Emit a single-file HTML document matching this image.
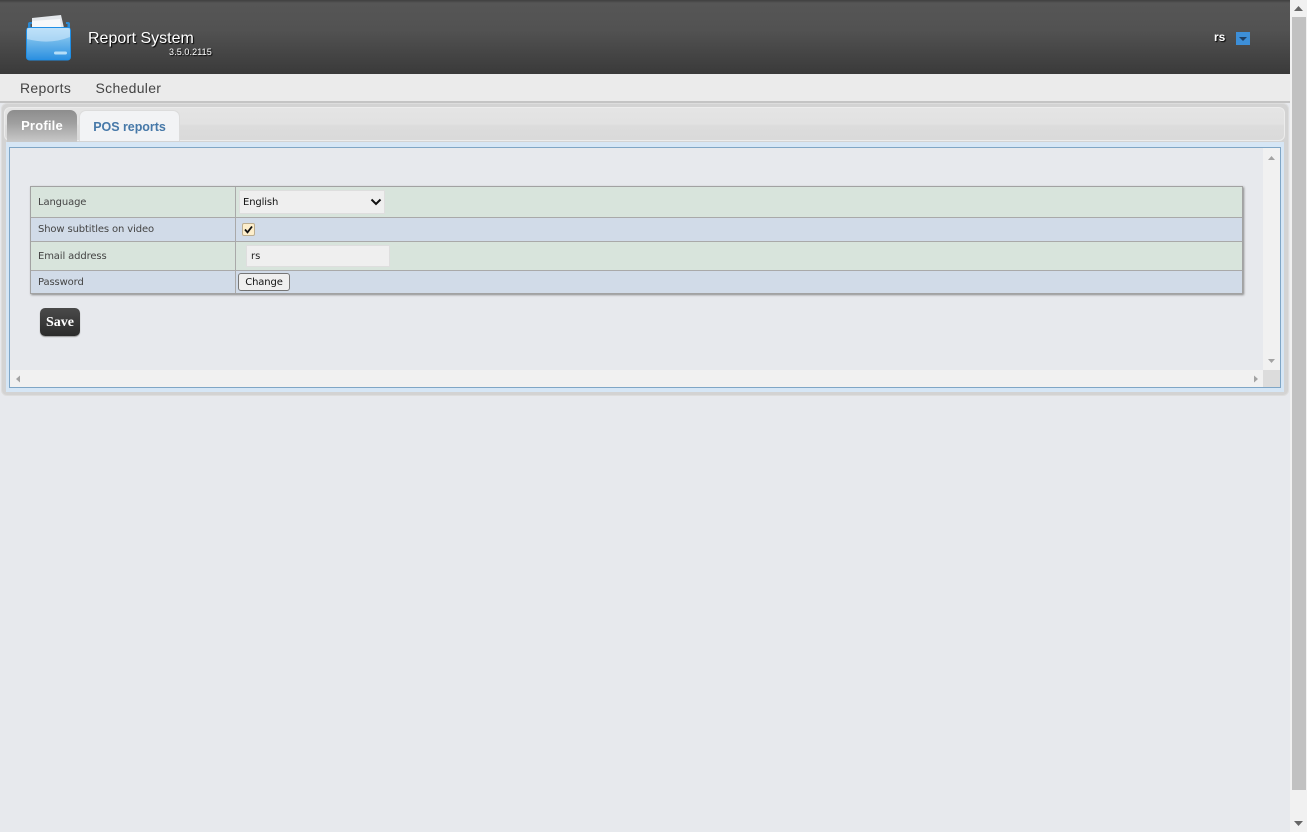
<!DOCTYPE html>
<html><head><meta charset="utf-8"><title>Report System</title>
<style>
html,body{margin:0;padding:0;width:1307px;height:832px;overflow:hidden;background:#e7e9ed;font-family:"DejaVu Sans","Liberation Sans",sans-serif;color:#333}
.a{position:absolute}
#hdr{left:0;top:0;width:1290px;height:74px;background:linear-gradient(#3f3f3f 0,#565656 3px,#525252 30px,#3a3a3a 74px)}
#nav{left:0;top:74px;width:1290px;height:27px;background:#ebebeb;border-bottom:2px solid #c4c4c4}
.nv{font-size:14px;top:80px;color:#444;line-height:16px;font-family:"Liberation Sans",sans-serif;letter-spacing:.3px}
#sb{left:1290px;top:0;width:17px;height:832px;background:#f1f1f1}
#th{left:1292px;top:17px;width:14px;height:773px;background:#c1c1c1}
#wrap{left:1px;top:103px;width:1288px;height:293px;background:#d3d3d3;border-radius:6px;box-sizing:border-box;border:1px solid #ddd}
#tabbar{left:4px;top:107px;width:1281px;height:34px;border-radius:6px;background:linear-gradient(#e4e4e4 0,#e2e2e2 50%,#dcdcdc 55%,#dadada 100%);border:1px solid #ececec;box-sizing:border-box}
.tab{box-sizing:border-box;border-radius:7px 7px 0 0;text-align:center;font-weight:bold;font-size:13px;line-height:31px;font-family:"Liberation Sans",sans-serif}
#bluebg{left:6px;top:142px;width:1278px;height:250px;background:#d6e6f5}
#pane{left:9px;top:147px;width:1272px;height:241px;box-sizing:border-box;border:1px solid #7fa6c6;background:#e7e9ed}
#vs{left:1263px;top:148px;width:17px;height:222px;background:#f1f1f1}
#hs{left:10px;top:370px;width:1253px;height:17px;background:#f1f1f1}
#cn{left:1263px;top:370px;width:17px;height:17px;background:#dcdcdc}
#tbl{left:30px;top:186px;width:1213px;height:108px;box-sizing:border-box;border:1px solid #a2a2a2;box-shadow:1px 1px 2px #888}
.r{position:absolute;left:0;width:1211px;box-sizing:border-box;border-bottom:1px solid #a9a9a9}
.l{position:absolute;left:7px;font-size:10px;color:#444;line-height:12px;white-space:nowrap;letter-spacing:-.13px}
#vl{left:235px;top:187px;width:1px;height:106px;background:#a9a9a9}
.sel{box-sizing:border-box;left:239px;top:190px;width:146px;height:24px;background:#efefef;border:1px solid #dedede;font-size:10px;line-height:24px;padding-left:3px;color:#111;letter-spacing:-.13px}
.inp{box-sizing:border-box;left:246px;top:245px;width:144px;height:22px;background:#efefef;border:1px solid #dedede;font-size:10px;line-height:22px;padding-left:4px;color:#222}
.chk{box-sizing:border-box;left:242px;top:223px;width:13px;height:13px;background:#fdeecb;border:1px solid #bcae90;border-radius:2px}
.btn{box-sizing:border-box;left:238px;top:273px;width:52px;height:18px;background:#efefef;border:1px solid #767676;border-radius:3px;text-align:center;font-size:10px;line-height:18px;color:#111;letter-spacing:-.13px}
#save{left:40px;top:308px;width:40px;height:28px;border-radius:5px;background:linear-gradient(#4a4a4a,#2b2b2b);color:#fff;font-family:"Liberation Serif",serif;font-weight:bold;font-size:14px;text-align:center;line-height:29px;box-shadow:0 1px 1px #999}
svg{position:absolute;overflow:visible}
</style></head><body>
<div class="a" id="hdr"></div>
<svg style="left:20px;top:10px" width="60" height="56" viewBox="0 0 60 56">
<defs><linearGradient id="g" x1="0" y1="0" x2="0" y2="1"><stop offset="0" stop-color="#a9d8f8"/><stop offset=".45" stop-color="#6cb6ea"/><stop offset="1" stop-color="#2a8fe0"/></linearGradient></defs>
<path d="M12 8L41 5 44 18H12z" fill="#e4e8ec"/>
<path d="M12 11L40 9 41 18H12z" fill="#f6f8fa"/>
<path d="M8 18v-4q0-2 2-2h2v2h-1.500v4zM50 18v-4q0-2-2-2h-2v2h1.500v4z" fill="#2b8ad4"/>
<rect x="6.500" y="17.500" width="44" height="32.500" rx="3" fill="url(#g)" stroke="#1f8fe6" stroke-width="1"/>
<path d="M7 18h43v9q-20 8-43 2z" fill="#cfe8fa" opacity=".6"/>
<rect x="34" y="41.500" width="13" height="3" rx="1.500" fill="#b5def8"/>
</svg>
<div class="a" style="left:88px;top:29px;font:16px/20px 'Liberation Sans',sans-serif;color:#fff;text-shadow:1px 1px 1px #000;white-space:nowrap">Report System</div>
<div class="a" style="left:169px;top:47px;font:9px/11px 'Liberation Sans',sans-serif;color:#fff;text-shadow:1px 1px 1px #000;white-space:nowrap;letter-spacing:.1px">3.5.0.2115</div>
<div class="a" style="left:1214px;top:30px;font:bold 12px/14px 'Liberation Sans',sans-serif;color:#fff;text-shadow:1px 1px 1px #000">rs</div>
<div class="a" style="left:1236px;top:32px;width:14px;height:13px;background:#3d8fd8"></div>
<svg style="left:1236px;top:32px" width="14" height="13"><path d="M3 5h8L7 9z" fill="#1f3f62"/></svg>
<div class="a" id="nav"></div>
<div class="a nv" style="left:20px">Reports</div>
<div class="a nv" style="left:95.500px">Scheduler</div>
<div class="a" id="wrap"></div>
<div class="a" id="tabbar"></div>
<div class="a tab" style="left:7px;top:110px;width:70px;height:32px;background:linear-gradient(#8d8d8d,#9f9f9f 40%,#c9c9c9);color:#fff;letter-spacing:.2px;line-height:32px">Profile</div>
<div class="a tab" style="left:79px;top:110px;width:101px;height:31px;background:#f2f3f5;border:1px solid #dcdcdc;border-bottom:0;color:#4678a8;line-height:32px;font-size:12.500px;letter-spacing:-.03px">POS reports</div>
<div class="a" id="bluebg"></div>
<div class="a" id="pane"></div>
<div class="a" id="vs"></div><div class="a" id="hs"></div><div class="a" id="cn"></div>
<svg style="left:0;top:0" width="1307" height="832">
<path d="M1268 160h7l-3.500-4zM1268 359h7l-3.500 4zM20 375.500v7l-4-3.500zM1254 375.500v7l4-3.500z" fill="#a3a3a3"/>
</svg>
<div class="a" id="tbl">
<div class="r" style="top:0;height:31px;background:#d8e4dc"><span class="l" style="top:10px">Language</span></div>
<div class="r" style="top:31px;height:24px;background:#d1dbe8"><span class="l" style="top:6px">Show subtitles on video</span></div>
<div class="r" style="top:55px;height:29px;background:#d8e4dc"><span class="l" style="top:9px">Email address</span></div>
<div class="r" style="top:84px;height:22px;background:#d1dbe8;border-bottom:0"><span class="l" style="top:6px">Password</span></div>
</div>
<div class="a" id="vl"></div>
<div class="a sel">English</div>
<svg style="left:370px;top:198px" width="12" height="8"><path d="M1.500 1.500L6 6l4.500-4.500" fill="none" stroke="#111" stroke-width="2"/></svg>
<div class="a chk"></div>
<svg style="left:242px;top:223px" width="13" height="13"><path d="M3 6.500l2.500 2.800L10 3.500" fill="none" stroke="#111" stroke-width="1.800"/></svg>
<div class="a inp">rs</div>
<div class="a btn">Change</div>
<div class="a" id="save">Save</div>
<div class="a" id="sb"></div><div class="a" id="th"></div>
<svg style="left:0;top:0" width="1307" height="832"><path d="M1294 11h9l-4.500-5zM1294 821h9l-4.500 5z" fill="#666"/></svg>
</body></html>
